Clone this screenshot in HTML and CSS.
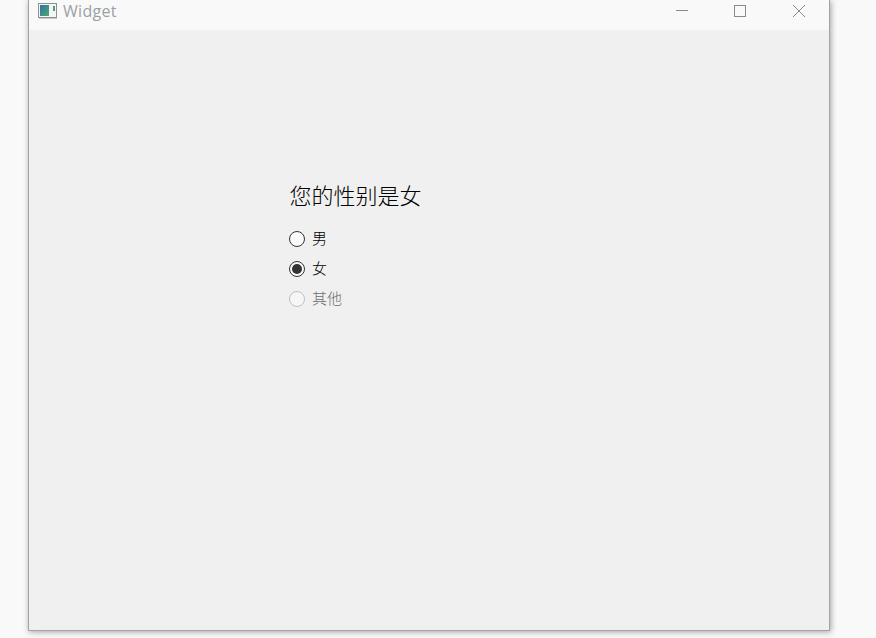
FILE: index.html
```html
<!DOCTYPE html>
<html lang="zh">
<head>
<meta charset="utf-8">
<title>Widget</title>
<link rel="stylesheet" href="styles.css">
</head>
<body>
<div class="window">
  <header class="titlebar">
    <div class="title">
      <svg class="app-icon" width="20" height="16" viewBox="0 0 20 16">
        <defs><linearGradient id="g" x1="0" y1="0" x2="1" y2="1"><stop offset="0" stop-color="#2f6fa8"/><stop offset="1" stop-color="#4fa86e"/></linearGradient></defs>
        <rect x="0.5" y="0.5" width="18" height="14" fill="#f4f4f4" stroke="#909090"/>
        <rect x="2" y="2" width="9" height="11" fill="url(#g)"/>
        <rect x="15" y="3" width="2" height="5" fill="#4f9c80"/>
        <rect x="1" y="15" width="18" height="1" fill="#c8c8c8"/>
      </svg>
      <span class="title-text">Widget</span>
    </div>
    <div class="controls">
      <svg class="ctl" width="58" height="22" viewBox="0 0 58 22"><path d="M23 10.5H35" stroke="#8a8a8a" fill="none"/></svg>
      <svg class="ctl" width="58" height="22" viewBox="0 0 58 22"><rect x="23.5" y="5.5" width="11" height="11" stroke="#8a8a8a" fill="none"/></svg>
      <svg class="ctl" width="58" height="22" viewBox="0 0 58 22"><path d="M24 5L36 17M36 5L24 17" stroke="#8a8a8a" fill="none"/></svg>
    </div>
  </header>
  <main class="content">
    <div class="group">
      <h1 class="question">您的性别是女</h1>
      <div class="option"><span class="radio"></span><span class="label">男</span></div>
      <div class="option"><span class="radio checked"></span><span class="label">女</span></div>
      <div class="option disabled"><span class="radio"></span><span class="label">其他</span></div>
    </div>
  </main>
</div>
</body>
</html>
```
FILE: styles.css
```css
html, body {
  margin: 0;
  padding: 0;
  height: 638px;
  overflow: hidden;
  background: #f9f9f9;
  font-family: "Noto Sans CJK SC", "Liberation Sans", sans-serif;
}
.window {
  box-sizing: border-box;
  width: 802px;
  height: 631px;
  margin-left: 28px;
  background: #f0f0f0;
  border: 1px solid #a3a3a3;
  border-top: 0;
  box-shadow: 1px 1px 6px rgba(0, 0, 0, 0.35);
  display: flex;
  flex-direction: column;
}
.titlebar {
  height: 30px;
  flex: none;
  background: #f9f9f9;
  display: flex;
  justify-content: space-between;
  align-items: flex-start;
}
.title {
  display: flex;
  align-items: center;
  height: 22px;
  padding-left: 9px;
  gap: 5px;
}
.app-icon { display: block; margin-top: -1px; }
.title-text {
  font-family: "Open Sans", "Liberation Sans", sans-serif;
  font-size: 16px;
  letter-spacing: 0.3px;
  color: #9aa0a6;
}
.controls {
  display: flex;
  padding-right: 2px;
}
.ctl { display: block; }
.content {
  flex: 1;
  padding: 151px 0 0 260px;
}
.question {
  margin: 0 0 17px 0.5px;
  font-size: 22px;
  line-height: 26px;
  font-weight: 300;
  color: #000;
  white-space: nowrap;
}
.option {
  display: flex;
  align-items: center;
  height: 30px;
  gap: 7px;
  font-size: 15px;
  font-weight: 300;
  color: #000;
}
.label { margin-top: -4px; }
.radio {
  box-sizing: border-box;
  width: 16px;
  height: 16px;
  border: 1px solid #333;
  border-radius: 50%;
  background: #fafafa;
  position: relative;
}
.radio.checked::after {
  content: "";
  position: absolute;
  inset: 2px;
  border-radius: 50%;
  background: #333;
}
.disabled { color: #6e6e6e; }
.disabled .radio { border-color: #c0c0c0; background: #f6f6f6; }
```
